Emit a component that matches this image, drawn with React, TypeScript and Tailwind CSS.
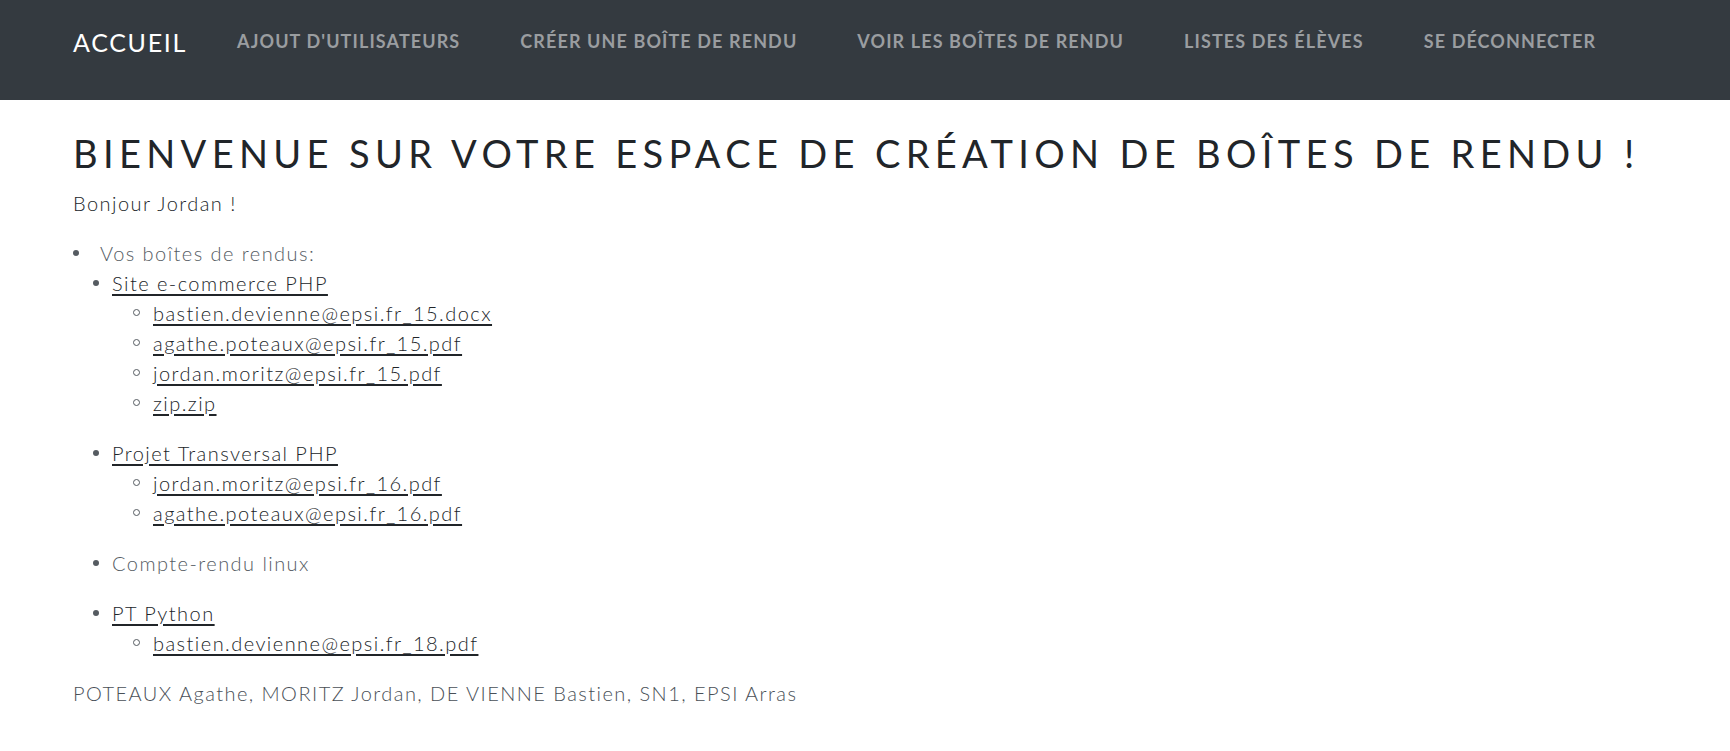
const navLinks = [
  "Ajout d'utilisateurs",
  'Créer une boîte de rendu',
  'Voir les boîtes de rendu',
  'Listes des élèves',
  'Se déconnecter',
]

type Box = { title: string; link: boolean; files: string[] }

const boxes: Box[] = [
  {
    title: 'Site e-commerce PHP',
    link: true,
    files: [
      'bastien.devienne@epsi.fr_15.docx',
      'agathe.poteaux@epsi.fr_15.pdf',
      'jordan.moritz@epsi.fr_15.pdf',
      'zip.zip',
    ],
  },
  {
    title: 'Projet Transversal PHP',
    link: true,
    files: ['jordan.moritz@epsi.fr_16.pdf', 'agathe.poteaux@epsi.fr_16.pdf'],
  },
  { title: 'Compte-rendu linux', link: false, files: [] },
  {
    title: 'PT Python',
    link: true,
    files: ['bastien.devienne@epsi.fr_18.pdf'],
  },
]

export default function App() {
  return (
    <div className="min-h-screen bg-white font-['Lato','Open_Sans',sans-serif]">
      {/* Navbar */}
      <nav className="h-[100px] bg-[#343a40]">
        <div className="h-[84px] px-[73px] flex items-center">
          <a href="#" className="text-[25px] leading-none text-white tracking-[1.7px]">
            ACCUEIL
          </a>
          <ul className="flex items-center gap-[60px] ml-[50px]">
            {navLinks.map((l) => (
              <li key={l}>
                <a href="#" className="uppercase text-[18px] leading-none font-bold tracking-[1.1px] text-[#9a9da0]">
                  {l}
                </a>
              </li>
            ))}
          </ul>
        </div>
      </nav>

      <main className="px-[73px] pt-[31px]">
        <h1 className="text-[38px] leading-[1.2] font-normal tracking-[5.35px] text-[#212529] mb-[11px]">
          BIENVENUE SUR VOTRE ESPACE DE CRÉATION DE BOÎTES DE RENDU !
        </h1>
        <p className="text-[20px] leading-[30px] font-light tracking-[1.45px] text-[#212529] mb-[20px]">
          Bonjour Jordan !
        </p>

        <ul className="text-[20px] leading-[30px] font-light tracking-[1.45px]">
          <li>
            <div className="flex items-center h-[30px]">
              <span className="w-[6px] h-[6px] rounded-full bg-[#555b61]" />
              <span className="ml-[21px] text-[#555c63]">Vos boîtes de rendus:</span>
            </div>
            <ul>
              {boxes.map((b) => (
                <li key={b.title} className="mb-[20px]">
                  <div className="flex items-center h-[30px] pl-[20px]">
                    <span className="w-[6px] h-[6px] rounded-full bg-[#555b61]" />
                    {b.link ? (
                      <a href="#" className="ml-[13px] text-[#212529] underline underline-offset-[3px]">
                        {b.title}
                      </a>
                    ) : (
                      <span className="ml-[13px] text-[#555c63]">{b.title}</span>
                    )}
                  </div>
                  {b.files.length > 0 && (
                    <ul>
                      {b.files.map((f) => (
                        <li key={f} className="flex items-center h-[30px] pl-[60px]">
                          <span className="w-[7px] h-[7px] rounded-full border border-[#555b61]" />
                          <a href="#" className="ml-[13px] text-[#212529] underline underline-offset-[3px]">
                            {f}
                          </a>
                        </li>
                      ))}
                    </ul>
                  )}
                </li>
              ))}
            </ul>
          </li>
        </ul>

        <p className="text-[20px] leading-[30px] font-light tracking-[1.45px] text-[#495057]">
          POTEAUX Agathe, MORITZ Jordan, DE VIENNE Bastien, SN1, EPSI Arras
        </p>
      </main>
    </div>
  )
}
